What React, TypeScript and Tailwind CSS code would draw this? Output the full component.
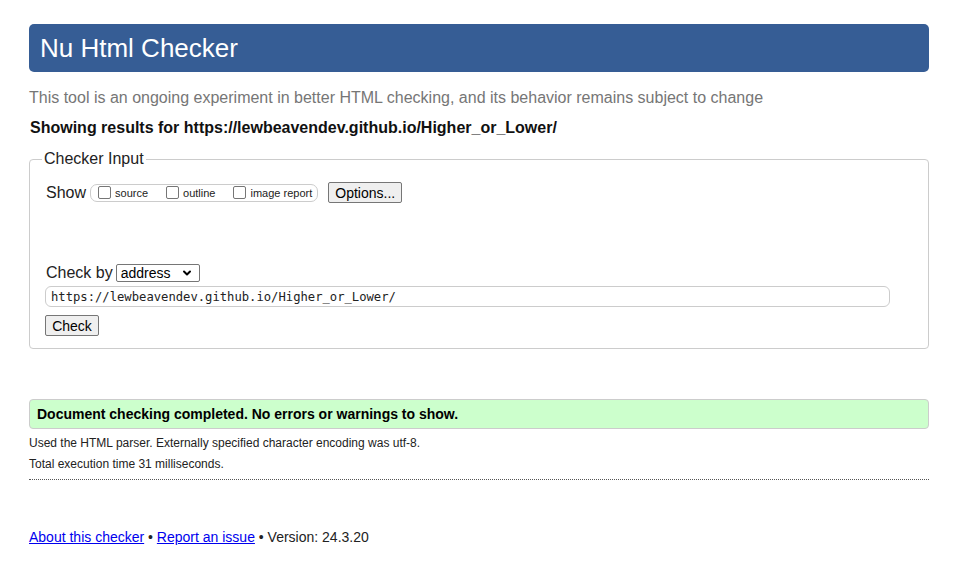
import { ChevronDown } from "lucide-react";

const font = "font-['Liberation_Sans',Arial,sans-serif]";

function Check({ label }: { label: string }) {
  return (
    <label className="flex items-center">
      <span className="ml-[7px] mr-[4px] h-[13px] w-[13px] rounded-[2px] border border-[#767676] bg-white" />
      <span className="pt-[2px] text-[11px] leading-[13px] text-[#222]">{label}</span>
    </label>
  );
}

export default function App() {
  return (
    <div className={`${font} min-h-[570px] bg-white pl-[29px] pr-[28px] pt-[24px] text-[#222]`}>
      <div className="flex h-[48px] items-center rounded-[5px] bg-[#365d95] px-[11px]">
        <h1 className="text-[26px] leading-[30px] text-white">Nu Html Checker</h1>
      </div>

      <p className="mt-[17px] text-[16px] leading-[18px] text-[#767676]">
        This tool is an ongoing experiment in better HTML checking, and its behavior remains subject to change
      </p>
      <p className="mt-[12px] pl-[1px] text-[16px] font-bold leading-[18px] text-[#111]">
        Showing results for https://lewbeavendev.github.io/Higher_or_Lower/
      </p>

      <fieldset className="mt-[13px] rounded-[4px] border border-[#cccccc] pb-[10px] pl-[12px] pr-[16px]">
        <legend className="px-[2px] text-[16px] leading-[18px] text-[#222]">Checker Input</legend>
        <div className="pl-[4px] pt-[14px]">
          <div className="flex items-center">
            <span className="text-[16px] leading-[18px]">Show</span>
            <div className="ml-[4px] flex h-[18px] items-center gap-[11px] rounded-[7px] border border-[#cccccc] pr-[5px]">
              <Check label="source" />
              <Check label="outline" />
              <Check label="image report" />
            </div>
            <button className="ml-[10px] h-[21px] w-[74px] rounded-[2px] border border-[#767676] bg-[#efefef] text-[14px] leading-[16px] text-black">
              Options...
            </button>
          </div>

          <div className="mt-[61px] flex items-center">
            <span className="text-[16px] leading-[18px]">Check by</span>
            <div className="ml-[3px] flex h-[18px] w-[84px] items-center justify-between rounded-[2px] border border-[#767676] bg-white pl-[4px] pr-[6px]">
              <span className="text-[14px] leading-[16px] text-black">address</span>
              <ChevronDown size={12} strokeWidth={4} className="text-black" />
            </div>
          </div>

          <div className="-ml-[1px] mt-[4px] flex h-[21px] w-[845px] items-center rounded-[6px] border border-[#cccccc] bg-white px-[5px]">
            <span className="font-['DejaVu_Sans_Mono',monospace] text-[12.2px] leading-[14px] text-[#222]">
              https://lewbeavendev.github.io/Higher_or_Lower/
            </span>
          </div>

          <button className="-ml-[1px] mt-[8px] h-[21px] w-[54px] rounded-[2px] border border-[#767676] bg-[#efefef] text-[14px] leading-[16px] text-black">
            Check
          </button>
        </div>
      </fieldset>

      <div className="mt-[50px] flex h-[30px] items-center rounded-[4px] border border-[#cccccc] bg-[#ccffcc] px-[7px]">
        <span className="text-[14px] font-bold leading-[16px] text-black">
          Document checking completed. No errors or warnings to show.
        </span>
      </div>

      <p className="mt-[7px] text-[12px] leading-[14px] text-[#222]">
        Used the HTML parser. Externally specified character encoding was utf-8.
      </p>
      <p className="mt-[7px] text-[12px] leading-[14px] text-[#222]">Total execution time 31 milliseconds.</p>
      <div className="mt-[8px] border-t border-dotted border-[#555]" />

      <p className="mt-[49px] text-[14px] leading-[16px] text-[#222]">
        <a href="#" className="text-[#0000ee] underline">About this checker</a> •{" "}
        <a href="#" className="text-[#0000ee] underline">Report an issue</a> • Version: 24.3.20
      </p>
    </div>
  );
}
